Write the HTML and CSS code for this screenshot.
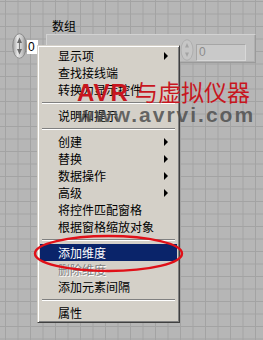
FILE: index.html
```html
<!DOCTYPE html>
<html>
<head>
<meta charset="utf-8">
<link rel="stylesheet" href="styles.css">
</head>
<body>
<div class="canvas">
  <div class="control">
    <div class="label">数组</div>
    <div class="row">
      <svg class="spin" width="15" height="26" viewBox="0 0 15 26">
        <defs>
          <linearGradient id="sg" x1="0" y1="0" x2="1" y2="0">
            <stop offset="0" stop-color="#9a9a9a"/>
            <stop offset="0.35" stop-color="#e6e6e6"/>
            <stop offset="0.7" stop-color="#c4c4c4"/>
            <stop offset="1" stop-color="#8a8a8a"/>
          </linearGradient>
        </defs>
        <ellipse cx="7.5" cy="13" rx="6.8" ry="12.3" fill="url(#sg)" stroke="#808080" stroke-width="0.8"/>
        <path d="M7.5 4.5 L10 10 L5 10 Z" fill="#6a6a6a"/>
        <path d="M7.5 21.5 L10 16 L5 16 Z" fill="#6a6a6a"/>
        <path d="M7.5 10 V16" stroke="#7a7a7a" stroke-width="1"/>
      </svg>
      <div class="index">0</div>
      <div class="frame">
        <div class="elem">
          <svg class="spin dim" width="14" height="22" viewBox="0 0 14 22">
            <ellipse cx="7" cy="11" rx="6" ry="10.3" fill="#c6c6c6" stroke="#a8a8a8" stroke-width="0.8"/>
            <path d="M7 4 L9 8.5 L5 8.5 Z" fill="#a4a4a4"/>
            <path d="M7 18 L9 13.5 L5 13.5 Z" fill="#a4a4a4"/>
          </svg>
          <div class="numbox">0</div>
        </div>
      </div>
    </div>
  </div>

  <div class="menu">
    <div class="item"><span>显示项</span><i class="arrow"></i></div>
    <div class="item"><span>查找接线端</span></div>
    <div class="item"><span>转换为显示控件</span></div>
    <div class="sep"></div>
    <div class="item"><span>说明和提示</span></div>
    <div class="sep"></div>
    <div class="item"><span>创建</span><i class="arrow"></i></div>
    <div class="item"><span>替换</span><i class="arrow"></i></div>
    <div class="item"><span>数据操作</span><i class="arrow"></i></div>
    <div class="item"><span>高级</span><i class="arrow"></i></div>
    <div class="item"><span>将控件匹配窗格</span></div>
    <div class="item"><span>根据窗格缩放对象</span></div>
    <div class="sep"></div>
    <div class="item active"><span>添加维度</span></div>
    <div class="item disabled"><span>删除维度</span></div>
    <div class="item"><span>添加元素间隔</span></div>
    <div class="sep"></div>
    <div class="item"><span>属性</span></div>
  </div>

  <div class="mark-title"><span class="avr">AVR</span><span class="cn">与虚拟仪器</span></div>
  <div class="mark-url">www.avrvi.com</div>

  <svg class="ring" width="170" height="50" viewBox="0 0 170 50">
    <ellipse cx="80.5" cy="24.5" rx="73.5" ry="17.5" fill="none" stroke="#e01018" stroke-width="2.4"/>
  </svg>
</div>
</body>
</html>
```

FILE: styles.css
```css
html, body {
  margin: 0;
  padding: 0;
}
body {
  width: 263px;
  height: 340px;
  overflow: hidden;
  font-family: "Noto Sans CJK SC", "Liberation Sans", sans-serif;
  font-size: 12px;
}
.canvas {
  position: relative;
  width: 263px;
  height: 340px;
  background-color: #b6b6b6;
  background-image:
    linear-gradient(to right, #a3a3a3 1px, transparent 1px),
    linear-gradient(to bottom, #a3a3a3 1px, transparent 1px);
  background-size: 12.5px 12.5px;
  background-position: 5px 1px;
}
.control {
  position: absolute;
  left: 12px;
  top: 18px;
}
.label {
  margin-left: 40px;
  height: 15px;
  line-height: 15px;
  color: #000;
}
.row {
  display: flex;
  align-items: flex-start;
}
.spin {
  display: block;
  margin-top: 0;
}
.index {
  margin-top: 7px;
  margin-left: 0;
  width: 10px;
  height: 14px;
  background: #fff;
  line-height: 14px;
  padding-left: 1px;
  font-family: "Liberation Sans", sans-serif;
  font-size: 12px;
  color: #000;
}
.frame {
  margin-left: 8px;
  margin-top: 1px;
  width: 208px;
  height: 27px;
  background: #bfbfbf;
  border: 1px solid;
  border-color: #d2d2d2 #9a9a9a #9a9a9a #d2d2d2;
  box-shadow: inset -1px -1px #b0b0b0;
  display: flex;
  justify-content: flex-end;
}
.elem {
  display: flex;
  align-items: flex-start;
  margin-right: 9px;
  margin-top: 4px;
}
.dim {
  margin-right: 2px;
}
.numbox {
  margin-top: 5px;
  width: 46px;
  height: 15px;
  background: #c9c9c9;
  border: 1px solid;
  border-color: #a6a6a6 #d8d8d8 #d8d8d8 #a6a6a6;
  line-height: 15px;
  padding-left: 2px;
  box-sizing: content-box;
  font-family: "Liberation Sans", sans-serif;
  font-size: 12px;
  color: #8c8c8c;
}

.menu {
  position: absolute;
  left: 37px;
  top: 45px;
  width: 137px;
  padding: 1px 2px 1px 2px;
  background: #d4d0c8;
  border: 1px solid;
  border-color: #d4d0c8 #404040 #404040 #d4d0c8;
  box-shadow: inset 1px 1px #ffffff, inset -1px -1px #808080;
  display: flex;
  flex-direction: column;
}
.item {
  height: 17px;
  line-height: 17px;
  padding-left: 18px;
  padding-right: 9px;
  display: flex;
  justify-content: space-between;
  align-items: center;
  color: #000;
  white-space: nowrap;
}
.item.active {
  background: #0a246a;
  color: #fff;
}
.item.disabled {
  color: #808080;
  text-shadow: 1px 1px 0 #ffffff;
}
.arrow {
  display: block;
  width: 0;
  height: 0;
  border-left: 4px solid #000;
  border-top: 4px solid transparent;
  border-bottom: 4px solid transparent;
}
.sep {
  height: 9px;
  display: flex;
  flex-direction: column;
  justify-content: center;
  margin: 0 2px;
}
.sep::before {
  content: "";
  display: block;
  border-top: 1px solid #808080;
  border-bottom: 1px solid #ffffff;
}

.mark-title {
  position: absolute;
  left: 77px;
  top: 76px;
  height: 30px;
  display: flex;
  align-items: baseline;
  color: #c8161e;
  white-space: nowrap;
}
.avr {
  font-family: "Liberation Sans", sans-serif;
  font-weight: bold;
  font-size: 24px;
  letter-spacing: 1px;
}
.cn {
  margin-left: 6px;
  font-family: "Noto Sans CJK SC", sans-serif;
  font-size: 23px;
  line-height: 30px;
}
.mark-url {
  position: absolute;
  left: 77px;
  top: 103px;
  font-family: "Liberation Sans", sans-serif;
  font-weight: bold;
  font-size: 21px;
  line-height: 24px;
  letter-spacing: 2px;
  color: rgba(80, 80, 80, 0.85);
  white-space: nowrap;
}
.ring {
  position: absolute;
  left: 28px;
  top: 229px;
}
```
